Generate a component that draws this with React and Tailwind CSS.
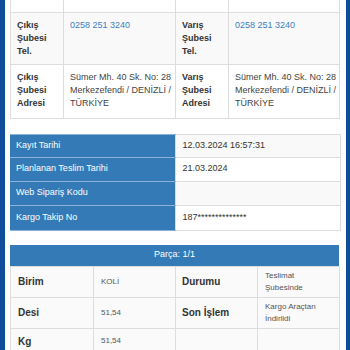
import React from 'react';

const font = { fontFamily: '"Liberation Sans", Arial, sans-serif' };

const BranchLabel = ({ lines }) => (
  <td className="border border-[#dddddd] px-[6px] pt-[6px] pb-[6px] align-top text-[9px] leading-[13px] font-bold text-[#333333]">
    {lines.map((l) => (
      <div key={l}>{l}</div>
    ))}
  </td>
);

const BranchValue = ({ children, link }) => (
  <td
    className={`border border-[#dddddd] pl-[6px] pr-[2px] pt-[6px] pb-[6px] align-top text-[9px] leading-[13px] whitespace-nowrap ${
      link ? 'text-[#3d7fc1]' : 'text-[#444444]'
    }`}
  >
    {children}
  </td>
);

const infoRows = [
  { label: 'Kayıt Tarihi', value: '12.03.2024 16:57:31', striped: true, h: 'h-[23px]' },
  { label: 'Planlanan Teslim Tarihi', value: '21.03.2024', striped: false, h: 'h-[24px]' },
  { label: 'Web Sipariş Kodu', value: '', striped: true, h: 'h-[24px]' },
  { label: 'Kargo Takip No', value: '187**************', striped: false, h: 'h-[25px]' }
];

const pieceRows = [
  { l1: 'Birim', v1: 'KOLİ', l2: 'Durumu', v2: ['Teslimat', 'Şubesinde'], h: 'h-[31px]' },
  { l1: 'Desi', v1: '51,54', l2: 'Son İşlem', v2: ['Kargo Araçtan', 'İndirildi'], h: 'h-[31px]' },
  { l1: 'Kg', v1: '51,54', l2: '', v2: [], h: 'h-[26px]' }
];

export default function App() {
  return (
    <div className="w-[350px] h-[350px] overflow-hidden flex bg-white" style={font}>
      <div className="w-[5px] shrink-0 bg-[#0f4c9c]" />

      <div className="flex-1 pl-[5px] pr-[5px] flex flex-col">
        {/* Branch info */}
        <table className="w-[329px] table-fixed border-collapse">
          <colgroup>
            <col className="w-[53px]" />
            <col className="w-[112px]" />
            <col className="w-[53px]" />
            <col className="w-[111px]" />
          </colgroup>
          <tbody>
            <tr className="h-[12px] bg-white">
              <td className="border border-t-0 border-[#dddddd]" />
              <td className="border border-t-0 border-[#dddddd]" />
              <td className="border border-t-0 border-[#dddddd]" />
              <td className="border border-t-0 border-[#dddddd]" />
            </tr>
            <tr className="h-[51px] bg-[#f9f9f9]">
              <BranchLabel lines={['Çıkış', 'Şubesi', 'Tel.']} />
              <BranchValue link>0258 251 3240</BranchValue>
              <BranchLabel lines={['Varış', 'Şubesi', 'Tel.']} />
              <BranchValue link>0258 251 3240</BranchValue>
            </tr>
            <tr className="h-[54px] bg-white">
              <BranchLabel lines={['Çıkış', 'Şubesi', 'Adresi']} />
              <BranchValue>
                <div>Sümer Mh. 40 Sk. No: 28</div>
                <div>Merkezefendi / DENİZLİ /</div>
                <div>TÜRKİYE</div>
              </BranchValue>
              <BranchLabel lines={['Varış', 'Şubesi', 'Adresi']} />
              <BranchValue>
                <div>Sümer Mh. 40 Sk. No: 28</div>
                <div>Merkezefendi / DENİZLİ /</div>
                <div>TÜRKİYE</div>
              </BranchValue>
            </tr>
          </tbody>
        </table>

        {/* Shipment info */}
        <table className="mt-[15px] w-[330px] table-fixed border-collapse">
          <colgroup>
            <col className="w-[165px]" />
            <col className="w-[165px]" />
          </colgroup>
          <tbody>
            {infoRows.map((row) => (
              <tr key={row.label} className={row.h}>
                <td className="bg-[#337ab7] border-y border-[#8db2da] pl-[6px] text-[9px] text-white">
                  {row.label}
                </td>
                <td
                  className={`border border-[#dddddd] pl-[7px] text-[9px] text-[#333333] ${
                    row.striped ? 'bg-[#f9f9f9]' : 'bg-white'
                  }`}
                >
                  {row.value}
                </td>
              </tr>
            ))}
          </tbody>
        </table>

        {/* Piece panel */}
        <div className="mt-[14px] w-[329px]">
          <div className="h-[21px] bg-[#337ab7] flex items-center justify-center text-[9px] text-white">
            Parça: 1/1
          </div>
          <table className="w-[329px] table-fixed border-collapse">
            <colgroup>
              <col className="w-[83px]" />
              <col className="w-[82px]" />
              <col className="w-[82px]" />
              <col className="w-[82px]" />
            </colgroup>
            <tbody>
              {pieceRows.map((r) => (
                <tr key={r.l1} className={`${r.h} bg-[#fafafa]`}>
                  <td className="border border-[#dddddd] pl-[7px] text-[10px] font-bold text-[#333333]">{r.l1}</td>
                  <td className="border border-[#dddddd] pl-[7px] text-[8px] text-[#555555]">{r.v1}</td>
                  <td className="border border-[#dddddd] pl-[6px] text-[10px] font-bold text-[#333333]">{r.l2}</td>
                  <td className="border border-[#dddddd] pl-[7px] text-[8px] leading-[12px] text-[#555555]">
                    {r.v2.map((v) => (
                      <div key={v}>{v}</div>
                    ))}
                  </td>
                </tr>
              ))}
            </tbody>
          </table>
        </div>
      </div>

      <div className="w-[6px] shrink-0 bg-[#0f4c9c]" />
    </div>
  );
}
